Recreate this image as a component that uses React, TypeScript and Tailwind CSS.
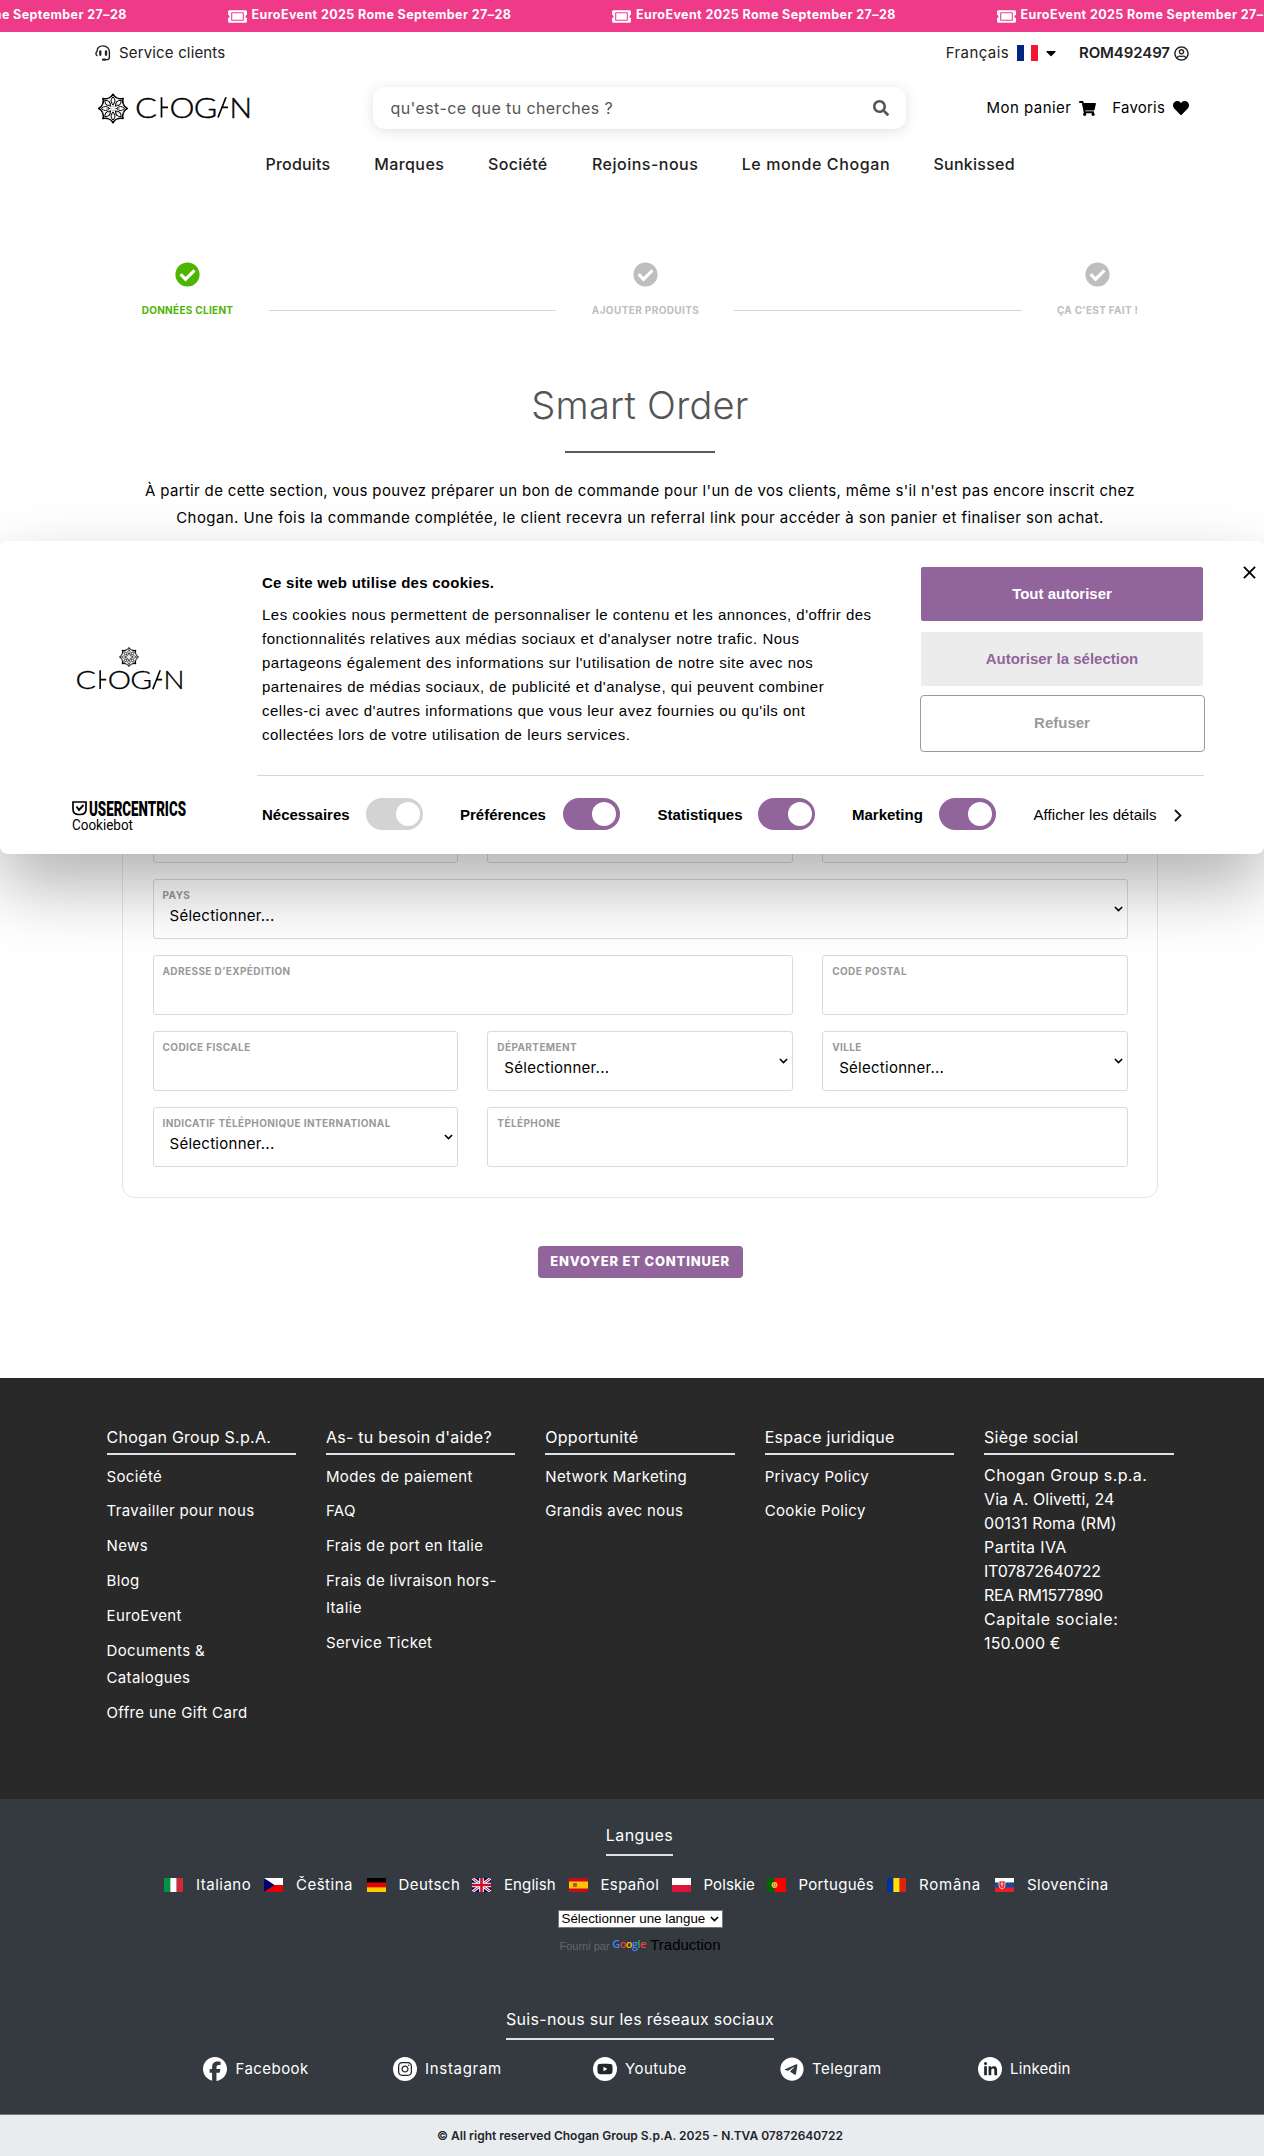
import type { ReactNode } from "react";
import {
  FaCaretDown,
  FaCheckCircle,
  FaHeart,
  FaRegUserCircle,
  FaSearch,
  FaShoppingCart,
  FaTicketAlt,
} from "react-icons/fa";
import { FaFacebook, FaInstagram, FaLinkedinIn, FaTelegram, FaYoutube } from "react-icons/fa6";

const PETALS = [0, 45, 90, 135, 180, 225, 270, 315];

function Flower({ className }: { className: string }) {
  return (
    <svg viewBox="-15 -15 30 30" className={className} fill="none" stroke="#000" strokeLinejoin="round">
      {PETALS.map((a) => (
        <g key={a} transform={`rotate(${a})`}>
          <path d="M-4.3 -10.4 Q-1.4 -11.4 0 -14.3 Q1.4 -11.4 4.3 -10.4" strokeWidth="1.5" />
          <path d="M0 -3.5 Q-4 -7.5 0 -11.6 Q4 -7.5 0 -3.5Z" strokeWidth="1" />
          <path d="M0 -1.5 V-6.5" strokeWidth="0.4" />
        </g>
      ))}
    </svg>
  );
}

function Wordmark({ className }: { className: string }) {
  return (
    <svg viewBox="0 0 114 22" className={`overflow-visible ${className}`} aria-label="Chogan">
      <g fill="#000" fontFamily="Lato, sans-serif" fontWeight="300" fontSize="28" stroke="#000" strokeWidth="0.4">
        <text x="-1" y="20.5" textLength="22" lengthAdjust="spacingAndGlyphs">C</text>
        <text x="33.6" y="20.5" textLength="25" lengthAdjust="spacingAndGlyphs">O</text>
        <text x="57.8" y="20.5" textLength="23.5" lengthAdjust="spacingAndGlyphs">G</text>
        <text x="93.6" y="20.5" textLength="22.5" lengthAdjust="spacingAndGlyphs">N</text>
      </g>
      <path d="M25.5 0.3V20.5M25.5 10.3H32M82 20.5L90 0.3M85.8 10.3H92" stroke="#000" strokeWidth="1.7" fill="none" />
    </svg>
  );
}

function HeadsetIcon({ className }: { className: string }) {
  return (
    <svg viewBox="0 0 16 16" className={className} fill="none" stroke="#212121" strokeWidth="1.4" strokeLinecap="round">
      <path d="M2 10.5C0.6 9.6 0.6 7.4 2 6.6C2.2 3 4.6 0.9 8 0.9C11.6 0.9 14.4 3.4 14.4 7V12.2C14.4 13.8 13.4 14.6 12 14.6H10" />
      <path d="M5.3 6.3V9.8M11 6.3V9.8" strokeWidth="2.3" />
      <path d="M8 14.6H10.2" strokeWidth="2.3" />
    </svg>
  );
}

function Banner() {
  return (
    <div className="flex h-8 overflow-hidden bg-[#ee3a88] text-white">
      <div className="-ml-[157px] flex h-[30px] shrink-0 items-center">
        {[0, 1, 2, 3].map((i) => (
          <div key={i} className="flex w-[384.5px] shrink-0 items-center gap-[5px]">
            <FaTicketAlt className="mt-0.5 h-[17px] w-[19px]" />
            <span className="text-[12.5px] font-bold tracking-[0.4px] whitespace-nowrap">
              EuroEvent 2025 Rome September 27–28
            </span>
          </div>
        ))}
      </div>
    </div>
  );
}

const NAV: [string, string][] = [
  ["Produits", "w-[65px] tracking-[0.2px]"],
  ["Marques", "w-[70px] tracking-[0.4px]"],
  ["Société", "w-[60px] tracking-[0.3px]"],
  ["Rejoins-nous", "w-[106px] tracking-[0.5px]"],
  ["Le monde Chogan", "w-[148px] tracking-[0.6px]"],
  ["Sunkissed", "w-[81px] tracking-[0.25px]"],
];

function Header() {
  return (
    <header className="text-[#212121]">
      <div className="flex h-[42px] items-center pr-[75px] pl-[95px] text-[15px]">
        <HeadsetIcon className="size-4" />
        <span className="ml-2 tracking-[0.16px]">Service clients</span>
        <span className="ml-auto tracking-[0.4px]">Français</span>
        <svg viewBox="0 0 21 16" className="ml-2 h-4 w-[21px]">
          <path d="M0 0H7V16H0Z" fill="#00267f" />
          <path d="M7 0H14V16H7Z" fill="#fff" />
          <path d="M14 0H21V16H14Z" fill="#f31830" />
        </svg>
        <FaCaretDown className="ml-[5px] size-4 text-black" />
        <span className="ml-[20px] w-[91px] font-semibold tracking-[-0.1px]">ROM492497</span>
        <FaRegUserCircle className="ml-1 size-[15px]" />
      </div>
      <div className="flex h-[68px] items-center pr-[75px] pl-[98px]">
        <Flower className="h-[31px] w-[30px]" />
        <Wordmark className="ml-2 h-[22px] w-[114px]" />
        <div className="ml-[123px] flex h-[42px] w-[533px] items-center justify-between rounded-[12px] bg-white pr-[17px] pl-[17.5px] text-[#555] shadow-[0_2px_14px_rgba(0,0,0,0.12)]">
          <span className="text-[16px] tracking-[0.4px]">qu'est-ce que tu cherches ?</span>
          <FaSearch className="size-4" />
        </div>
        <div className="ml-auto flex items-center text-[15px] text-black">
          <span className="tracking-[0.45px]">Mon panier</span>
          <FaShoppingCart className="ml-2 h-[15px] w-[17px]" />
          <span className="ml-4 tracking-[0.2px]">Favoris</span>
          <FaHeart className="ml-2 size-4" />
        </div>
      </div>
      <nav className="flex h-[43px] items-center gap-[43.8px] pl-[265.5px] text-[16px] font-medium whitespace-nowrap">
        {NAV.map(([label, cls]) => (
          <span key={label} className={cls}>{label}</span>
        ))}
      </nav>
    </header>
  );
}

function Step({ label, className }: { label: string; className: string }) {
  return (
    <div className={`flex flex-col items-center ${className}`}>
      <FaCheckCircle className="size-[25px]" />
      <span className="mt-[15px] text-[10px] leading-4 font-bold whitespace-nowrap">{label}</span>
    </div>
  );
}

function Stepper() {
  return (
    <div className="flex items-end pt-[77px] pl-[142px]">
      <Step label="DONNÉES CLIENT" className="w-[91px] tracking-[0.3px] text-[#4db400]" />
      <div className="mx-9 mb-[7px] h-px w-[287px] bg-[#d6d6d6]" />
      <Step label="AJOUTER PRODUITS" className="w-[107px] tracking-[0.38px] text-[#bebebe]" />
      <div className="mx-[35px] mb-[7px] h-px w-[288px] bg-[#d6d6d6]" />
      <Step label="ÇA C'EST FAIT !" className="w-[81px] tracking-[0.28px] text-[#bebebe]" />
    </div>
  );
}

function Arrow({ className }: { className: string }) {
  return (
    <svg viewBox="0 0 10 6" className={className} fill="none" stroke="currentColor" strokeWidth="1.8">
      <path d="M1 0.8L5 4.8L9 0.8" />
    </svg>
  );
}

function Field({ label, select, className = "" }: { label?: string; select?: boolean; className?: string }) {
  return (
    <div className={`flex h-[60px] items-center justify-between rounded-[3px] border border-[#dadada] pr-[4px] pl-[9px] ${className}`}>
      <div className="flex h-full flex-col pt-[7px]">
        {label && (
          <span className="text-[10px] leading-4 font-bold tracking-[0.4px] whitespace-nowrap text-[#999]">{label}</span>
        )}
        {select && (
          <span className="mt-px pl-[7px] text-[15px] leading-6 tracking-[0.27px] text-black">Sélectionner...</span>
        )}
      </div>
      {select && <Arrow className="h-[6px] w-[9px] text-black" />}
    </div>
  );
}

function CustomerForm() {
  return (
    <div className="mt-[166px] grid h-[500.5px] w-[1036px] grid-cols-3 content-start gap-x-[29.5px] gap-y-4 rounded-[12px] border border-[#e6e6e6] px-[29.5px] pt-[29px]">
      <Field />
      <Field />
      <Field />
      <Field />
      <Field />
      <Field />
      <Field label="PAYS" select className="col-span-3" />
      <Field label="ADRESSE D’EXPÉDITION" className="col-span-2" />
      <Field label="CODE POSTAL" />
      <Field label="CODICE FISCALE" />
      <Field label="DÉPARTEMENT" select />
      <Field label="VILLE" select />
      <Field label="INDICATIF TÉLÉPHONIQUE INTERNATIONAL" select />
      <Field label="TÉLÉPHONE" className="col-span-2" />
    </div>
  );
}

function Main() {
  return (
    <main className="h-[1192.5px]">
      <Stepper />
      <div className="flex flex-col items-center pl-4">
        <h1 className="mt-[60px] text-[38px] leading-[54px] font-light tracking-[0.25px] text-[#555]">Smart Order</h1>
        <div className="mt-[18.5px] h-[2.5px] w-[150px] bg-[#555b5b]" />
        <p className="mt-[24px] text-center text-[15px] leading-[27px] whitespace-nowrap text-black">
          <span className="tracking-[0.335px]">
            À partir de cette section, vous pouvez préparer un bon de commande pour l'un de vos clients, même s'il n'est pas encore inscrit chez
          </span>
          <br />
          <span className="tracking-[0.425px]">
            Chogan. Une fois la commande complétée, le client recevra un referral link pour accéder à son panier et finaliser son achat.
          </span>
        </p>
        <CustomerForm />
        <button className="mt-12 h-[32.5px] w-[205px] rounded-[4px] bg-[#91649b] text-[13px] font-extrabold tracking-[0.8px] whitespace-nowrap text-white">
          ENVOYER ET CONTINUER
        </button>
      </div>
    </main>
  );
}

function Toggle({ label, off, className }: { label: string; off?: boolean; className: string }) {
  return (
    <div className={`flex items-center justify-between ${className}`}>
      <span className="mt-0.5 font-bold">{label}</span>
      <span className={`flex h-8 w-[57px] items-center justify-end rounded-full pr-[3.5px] ${off ? "bg-[#d3d3d3]" : "bg-[#91649b]"}`}>
        <span className="size-[24px] rounded-full bg-white" />
      </span>
    </div>
  );
}

function CookieDialog() {
  return (
    <div
      role="dialog"
      className="absolute top-[541px] left-0 flex h-[313px] w-[1264px] rounded-[8px] bg-white font-['Liberation_Sans',Arial,sans-serif] text-[15px] text-[#141414] shadow-[0_32px_68px_rgba(0,0,0,0.3)]"
    >
      <div className="flex w-[257px] flex-col pt-[106px]">
        <div className="flex w-[258px] flex-col items-center">
          <Flower className="size-5" />
          <Wordmark className="mt-[3px] h-[20.5px] w-[107px]" />
        </div>
        <svg viewBox="0 0 114 32" className="mt-[109.5px] ml-[72px] h-8 w-[114px] overflow-visible" fill="#000">
          <path d="M1 2H14V9Q14 14.5 8.5 14.5H6.5Q1 14.5 1 9Z" fill="none" stroke="#000" strokeWidth="1.7" />
          <path d="M4.5 6.5L7 10L11.5 5" fill="none" stroke="#000" strokeWidth="1.9" />
          <text x="17" y="15.5" fontFamily="Roboto, sans-serif" fontWeight="900" fontSize="20" textLength="97" lengthAdjust="spacingAndGlyphs">USERCENTRICS</text>
          <text x="0" y="29.5" fontFamily="Roboto, sans-serif" fontSize="14.5" textLength="61" lengthAdjust="spacingAndGlyphs">Cookiebot</text>
        </svg>
      </div>
      <div className="w-[947px]">
        <div className="flex h-[235px] border-b border-[#d6d6d6] pl-[5px]">
          <div className="w-[658px] pt-[30px] text-black">
            <div className="leading-6 font-bold tracking-[0.25px]">Ce site web utilise des cookies.</div>
            <p className="mt-[8px] leading-6 tracking-[0.5px] whitespace-nowrap">
              Les cookies nous permettent de personnaliser le contenu et les annonces, d'offrir des<br />
              fonctionnalités relatives aux médias sociaux et d'analyser notre trafic. Nous<br />
              partageons également des informations sur l'utilisation de notre site avec nos<br />
              partenaires de médias sociaux, de publicité et d'analyse, qui peuvent combiner<br />
              celles-ci avec d'autres informations que vous leur avez fournies ou qu'ils ont<br />
              collectées lors de votre utilisation de leurs services.
            </p>
          </div>
          <div className="flex w-[284px] flex-col items-center pt-[26px] font-bold">
            <button className="h-[54px] w-[282px] rounded-[2px] bg-[#91649b] text-white">Tout autoriser</button>
            <button className="mt-[11px] h-[54px] w-[282px] rounded-[2px] bg-[#ececec] text-[#91649b]">Autoriser la sélection</button>
            <button className="mt-[8.5px] h-[57px] w-[285px] rounded-[4px] border border-[#9b9b9b] bg-white text-[#9b9b9b]">Refuser</button>
          </div>
        </div>
        <div className="flex items-center pt-[22px] pl-[5px] text-black">
          <Toggle label="Nécessaires" off className="w-[161px]" />
          <Toggle label="Préférences" className="ml-[37px] w-[159.5px]" />
          <Toggle label="Statistiques" className="ml-[38px] w-[157.5px]" />
          <Toggle label="Marketing" className="ml-[37px] w-[143.5px]" />
          <span className="mt-0.5 ml-[38px] tracking-[0.08px]">Afficher les détails</span>
          <svg viewBox="0 0 8 13" className="mt-0.5 ml-[17px] h-[13px] w-2" fill="none" stroke="#141414" strokeWidth="1.8">
            <path d="M1 1L6.5 6.5L1 12" />
          </svg>
        </div>
      </div>
      <svg viewBox="0 0 14 14" className="mt-[25px] ml-[39px] size-[13px]" stroke="#000" strokeWidth="2">
        <path d="M1 1L13 13M13 1L1 13" />
      </svg>
    </div>
  );
}

const COLUMNS: { title: string; items: ReactNode[] }[] = [
  {
    title: "Chogan Group S.p.A.",
    items: ["Société", "Travailler pour nous", "News", "Blog", "EuroEvent", <>Documents &<br />Catalogues</>, "Offre une Gift Card"],
  },
  {
    title: "As- tu besoin d'aide?",
    items: ["Modes de paiement", "FAQ", "Frais de port en Italie", <>Frais de livraison hors-<br />Italie</>, "Service Ticket"],
  },
  { title: "Opportunité", items: ["Network Marketing", "Grandis avec nous"] },
  { title: "Espace juridique", items: ["Privacy Policy", "Cookie Policy"] },
];

const ADDRESS: [string, string][] = [
  ["Chogan Group s.p.a.", "tracking-[0.4px]"],
  ["Via A. Olivetti, 24", "tracking-[0.05px]"],
  ["00131 Roma (RM)", "tracking-[0.1px]"],
  ["Partita IVA", "tracking-[0.35px]"],
  ["IT07872640722", "tracking-[-0.25px]"],
  ["REA RM1577890", "tracking-[-0.45px]"],
  ["Capitale sociale:", "tracking-[0.6px]"],
  ["150.000 €", "tracking-[0.1px]"],
];

function ColumnTitle({ children }: { children: ReactNode }) {
  return <h2 className="h-[30px] border-b-2 border-[#dee2e6] text-[16px] leading-6 tracking-[0.27px]">{children}</h2>;
}

function FooterColumns() {
  return (
    <div className="flex h-[421px] gap-[30px] bg-[#292929] pt-[47px] pl-[106.5px] text-white">
      {COLUMNS.map((c) => (
        <div key={c.title} className="w-[189.4px]">
          <ColumnTitle>{c.title}</ColumnTitle>
          <ul className="mt-[8px] flex flex-col gap-[7.95px] text-[15px] leading-[27px] tracking-[0.37px] whitespace-nowrap">
            {c.items.map((item, i) => (
              <li key={i}>{item}</li>
            ))}
          </ul>
        </div>
      ))}
      <div className="w-[189.5px]">
        <ColumnTitle>Siège social</ColumnTitle>
        <div className="mt-[8px] text-[16px] leading-6 whitespace-nowrap">
          {ADDRESS.map(([line, cls]) => (
            <div key={line} className={cls}>{line}</div>
          ))}
        </div>
      </div>
    </div>
  );
}

function Flag({ children }: { children: ReactNode }) {
  return <svg viewBox="0 0 19 14" className="h-[14px] w-[19px] shrink-0">{children}</svg>;
}

function Stripes({ colors, vertical }: { colors: string[]; vertical?: boolean }) {
  const n = colors.length;
  return (
    <>
      {colors.map((c, i) =>
        vertical ? (
          <rect key={i} x={(19 / n) * i} y="0" width={19 / n} height="14" fill={c} />
        ) : (
          <rect key={i} x="0" y={(14 / n) * i} width="19" height={14 / n} fill={c} />
        ),
      )}
    </>
  );
}

const LANGS: { name: string; cls: string; flag: ReactNode }[] = [
  { name: "Italiano", cls: "w-[68px] tracking-[0.5px]", flag: <Stripes vertical colors={["#009246", "#fff", "#ce2b37"]} /> },
  {
    name: "Čeština",
    cls: "w-[70.5px] tracking-[0.5px]",
    flag: (
      <>
        <Stripes colors={["#fff", "#e80000"]} />
        <path d="M0 0L10.5 7L0 14Z" fill="#00006f" />
      </>
    ),
  },
  { name: "Deutsch", cls: "w-[73.5px] tracking-[0.45px]", flag: <Stripes colors={["#000", "#e00", "#fc0"]} /> },
  {
    name: "English",
    cls: "w-[64.5px] tracking-[0.1px]",
    flag: (
      <>
        <rect width="19" height="14" fill="#006" />
        <path d="M0 0L19 14M19 0L0 14" stroke="#fff" strokeWidth="3" />
        <path d="M0 0L19 14M19 0L0 14" stroke="#c00" strokeWidth="1" />
        <path d="M9.5 0V14M0 7H19" stroke="#fff" strokeWidth="4.6" />
        <path d="M9.5 0V14M0 7H19" stroke="#c8102e" strokeWidth="2.6" />
      </>
    ),
  },
  {
    name: "Español",
    cls: "w-[71px] tracking-[0.35px]",
    flag: (
      <>
        <rect width="19" height="14" fill="#c60b1e" />
        <rect y="3.5" width="19" height="7" fill="#ffc400" />
        <rect x="4" y="5" width="4" height="4" rx="1" fill="#b5532b" />
      </>
    ),
  },
  { name: "Polskie", cls: "w-[63px] tracking-[0.1px]", flag: <Stripes colors={["#fff", "#dc143c"]} /> },
  {
    name: "Português",
    cls: "w-[88.5px] tracking-[0.3px]",
    flag: (
      <>
        <rect width="19" height="14" fill="#f00" />
        <rect width="7.5" height="14" fill="#060" />
        <circle cx="7.5" cy="7" r="3" fill="#e8c531" />
        <circle cx="7.5" cy="7" r="1.5" fill="#e33" />
        <circle cx="7.5" cy="7" r="0.8" fill="#fff" />
      </>
    ),
  },
  { name: "Româna", cls: "w-[76px] tracking-[0.8px]", flag: <Stripes vertical colors={["#00319c", "#ffde00", "#de2110"]} /> },
  {
    name: "Slovenčina",
    cls: "w-[84px] tracking-[0.45px]",
    flag: (
      <>
        <Stripes colors={["#fff", "#0b4ea2", "#ee1c25"]} />
        <path d="M4 3H10V7.5Q10 10 7 11Q4 10 4 7.5Z" fill="#ee1c25" stroke="#fff" strokeWidth="0.7" />
        <path d="M7 4V9M5.5 6H8.5" stroke="#fff" strokeWidth="0.8" />
      </>
    ),
  },
];

function Languages() {
  return (
    <div className="flex h-[185px] flex-col items-center border-b border-[#333738] bg-[#343a40] pt-[24.5px] pr-[2px] text-white">
      <h2 className="ml-[17px] h-[33px] border-b-2 border-[#dee2e6] text-[16px] leading-6 tracking-[0.4px]">Langues</h2>
      <div className="mt-[17px] flex h-6 w-full items-center pl-[164px] text-[15px] whitespace-nowrap">
        {LANGS.map((l) => (
          <div key={l.name} className="flex shrink-0 items-center gap-[13px]">
            <Flag>{l.flag}</Flag>
            <span className={l.cls}>{l.name}</span>
          </div>
        ))}
      </div>
      <div className="mt-[13px] ml-[18px] flex h-[18px] w-[165px] items-center justify-between border border-[#767676] bg-white pr-[3px] pl-[3px] font-['Liberation_Sans',Arial,sans-serif] text-[13.33px] whitespace-nowrap text-black">
        <span>Sélectionner une langue</span>
        <Arrow className="h-[6px] w-[9px]" />
      </div>
      <div className="mt-[7px] ml-[18px] flex h-5 w-[161px] items-center font-['Liberation_Sans',Arial,sans-serif] whitespace-nowrap">
        <span className="w-[53px] pt-[3px] text-[11px] text-[#666]">Fourni par</span>
        <span className="w-[38px] pb-px font-['Open_Sans',sans-serif] text-[11px] font-semibold tracking-[-0.6px]">
          <span className="text-[#4285f4]">G</span>
          <span className="text-[#ea4335]">o</span>
          <span className="text-[#fbbc05]">o</span>
          <span className="text-[#4285f4]">g</span>
          <span className="text-[#34a853]">l</span>
          <span className="text-[#ea4335]">e</span>
        </span>
        <span className="text-[15px] text-black">Traduction</span>
      </div>
    </div>
  );
}

function SocialDisc({ children }: { children: ReactNode }) {
  return <span className="flex size-6 items-center justify-center rounded-full bg-white text-[#23272b]">{children}</span>;
}

function Socials() {
  return (
    <div className="flex h-[131px] flex-col items-center border-b border-[#777] bg-[#343a40] pt-[23.5px] text-white">
      <h2 className="ml-4 h-[33px] border-b-2 border-[#dee2e6] text-[16px] leading-6 tracking-[0.29px]">
        Suis-nous sur les réseaux sociaux
      </h2>
      <div className="mt-[17px] flex h-6 w-[1264px] items-center pl-[203px] text-[15px] tracking-[0.45px] whitespace-nowrap">
        <div className="flex w-[189.5px] items-center gap-[8.5px]">
          <FaFacebook className="size-6" />
          Facebook
        </div>
        <div className="flex w-[200.5px] items-center gap-[8.5px] tracking-[0.7px]">
          <SocialDisc><FaInstagram className="size-[16px]" /></SocialDisc>
          Instagram
        </div>
        <div className="flex w-[187px] items-center gap-[8px]">
          <SocialDisc><FaYoutube className="size-[16px]" /></SocialDisc>
          Youtube
        </div>
        <div className="flex w-[198px] items-center gap-[8px]">
          <FaTelegram className="size-6" />
          Telegram
        </div>
        <div className="flex items-center gap-[8px] tracking-[0.15px]">
          <SocialDisc><FaLinkedinIn className="size-[15px]" /></SocialDisc>
          Linkedin
        </div>
      </div>
    </div>
  );
}

export default function App() {
  return (
    <div className="relative h-[2156px] w-[1264px] overflow-hidden bg-white font-['Inter',sans-serif]">
      <Banner />
      <Header />
      <Main />
      <footer>
        <FooterColumns />
        <Languages />
        <Socials />
        <div className="flex h-[42px] items-center justify-center bg-[#e9ecef] pl-4 text-[12px] font-semibold text-[#212529]">
          © All right reserved Chogan Group S.p.A. 2025 - N.TVA 07872640722
        </div>
      </footer>
      <CookieDialog />
    </div>
  );
}
